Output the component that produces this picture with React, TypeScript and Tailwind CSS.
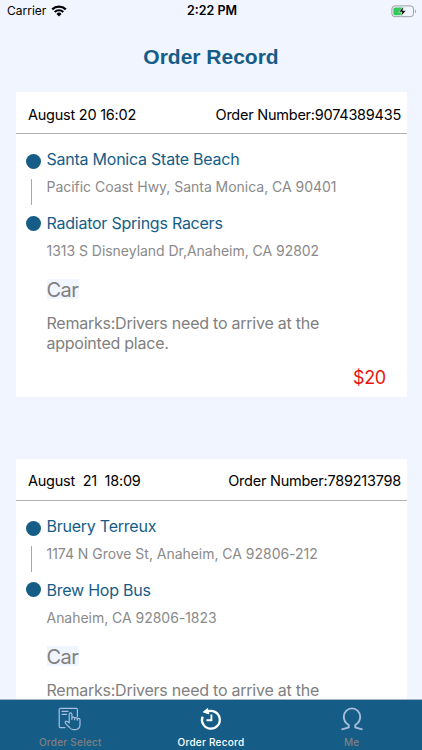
import { Fragment } from "react";

interface Stop {
  name: string;
  address: string;
}

interface Order {
  date: string;
  number: string;
  stops: Stop[];
  vehicle: string;
  remarks: string;
  price: string;
}

const orders: Order[] = [
  {
    date: "August 20 16:02",
    number: "9074389435",
    stops: [
      {
        name: "Santa Monica State Beach",
        address: "Pacific Coast Hwy, Santa Monica, CA 90401",
      },
      {
        name: "Radiator Springs Racers",
        address: "1313 S Disneyland Dr,Anaheim, CA 92802",
      },
    ],
    vehicle: "Car",
    remarks: "Drivers need to arrive at the appointed place.",
    price: "$20",
  },
  {
    date: "August  21  18:09",
    number: "789213798",
    stops: [
      {
        name: "Bruery Terreux",
        address: "1174 N Grove St, Anaheim, CA 92806-212",
      },
      { name: "Brew Hop Bus", address: "Anaheim, CA 92806-1823" },
    ],
    vehicle: "Car",
    remarks: "Drivers need to arrive at the appointed place.",
    price: "$20",
  },
];

function WifiIcon() {
  return (
    <svg width="16" height="12" viewBox="0 0 16 12" fill="none">
      <path d="M1.2 4.3a9.8 9.8 0 0 1 13.6 0" stroke="black" strokeWidth="2.3" />
      <path d="M3.7 7a6.2 6.2 0 0 1 8.6 0" stroke="black" strokeWidth="2.1" />
      <path d="M8 11.4 5.5 8.9a3.5 3.5 0 0 1 5 0Z" fill="black" />
    </svg>
  );
}

function BatteryIcon() {
  return (
    <svg width="26" height="13" viewBox="0 0 26 13" fill="none">
      <rect x="0.9" y="0.9" width="21.6" height="10.8" rx="3" stroke="#9b9da3" />
      <path d="M24 4.4c1.3.5 1.3 3.3 0 3.8Z" fill="#9b9da3" />
      <rect x="2.4" y="2.4" width="9.6" height="7.8" rx="1.5" fill="#34c759" />
      <path
        d="M12.9 1.2 7.6 7h3.3l-1.1 4.4L15.2 5.6h-3.4Z"
        fill="black"
        stroke="#f0f5ff"
        strokeWidth="0.7"
      />
    </svg>
  );
}

function SelectIcon() {
  return (
    <svg
      width="24"
      height="24"
      viewBox="0 0 24 24"
      fill="none"
      stroke="#a9bede"
      strokeWidth="1.2"
      strokeLinecap="round"
      strokeLinejoin="round"
    >
      <path d="M7 20.6H2.4a1.2 1.2 0 0 1-1.2-1.2V2.5a1.2 1.2 0 0 1 1.2-1.2h15.8a1.2 1.2 0 0 1 1.2 1.2v7" />
      <path d="M4 4.3h6M4 7.3h4.5" />
      <path d="M11.2 15.8V7.2a1.35 1.35 0 0 1 2.7 0v5.3-1.1a1.35 1.35 0 0 1 2.7 0v1.3-.7a1.35 1.35 0 0 1 2.7 0v1.2-.4a1.35 1.35 0 0 1 2.7 0v4.8c0 3.2-1.8 5-4.8 5h-1.8c-1.8 0-2.8-.7-3.9-2.1l-4-4.2c-1.1-1.4.5-2.8 1.8-1.8Z" />
    </svg>
  );
}

function RecordIcon() {
  return (
    <svg width="24" height="24" viewBox="0 0 24 24" fill="none" stroke="white">
      <path d="M3.6 9.6A8.9 8.9 0 1 0 8 4.8" strokeWidth="2.3" />
      <path d="M4.3 5 8.6 1.5 9.8 6.9Z" fill="white" strokeLinejoin="round" />
      <path d="M12.4 7.6v5.7H7.4" strokeWidth="1.9" />
    </svg>
  );
}

function MeIcon() {
  return (
    <svg
      width="24"
      height="24"
      viewBox="0 0 24 24"
      fill="none"
      stroke="#a9bede"
      strokeWidth="1.9"
    >
      <path d="M1.4 22.4c2.4-.3 4.6-1.2 7.3-2.1V18C5 15.9 3.8 13 3.8 9.6a8.2 8.2 0 0 1 16.4 0c0 3.4-1.2 6.3-4.9 8.4v2.3c2.7.9 4.9 1.8 7.3 2.1" />
    </svg>
  );
}

function OrderCard({ order }: { order: Order }) {
  return (
    <article className="h-[305px] shrink-0 bg-white">
      <header className="flex h-[42px] items-center justify-between border-b border-[#b2b2b2] pt-[4px] pr-[5.5px] pl-[12.5px] text-[14.5px] tracking-[-0.24px] whitespace-pre text-black">
        <span>{order.date}</span>
        <span>{`Order Number:${order.number}`}</span>
      </header>

      <div className="grid grid-cols-[15px_1fr] gap-x-[5.5px] pt-[12px] pl-[10.5px]">
        {order.stops.map((stop, i) => (
          <Fragment key={stop.name}>
            <div className="flex flex-col">
              <span
                className={`${i === 0 ? "mt-[8px]" : "mt-[5.5px]"} size-[15px] rounded-full bg-[#155d87]`}
              />
              {i === 0 && (
                <span className="mt-[10px] ml-[5px] h-[26px] w-px bg-[#a8a8a8]" />
              )}
            </div>
            <div className="h-16">
              <h2 className="h-[26px] text-[16px] leading-[26px] tracking-[-0.24px] text-[#155d87]">
                {stop.name}
              </h2>
              <p className="mt-[4px] text-[14px] leading-[22px] tracking-[-0.03px] text-[#8a8a8a]">
                {stop.address}
              </p>
            </div>
          </Fragment>
        ))}
      </div>

      <div className="pl-[31px] text-[#808080]">
        <span className="mt-[5px] block h-5 w-8 bg-[#f0f5ff] text-[20px] leading-[22px] tracking-[-0.5px]">
          {order.vehicle}
        </span>
        <p className="mt-[15px] w-[300px] text-[16px] leading-[19.5px] tracking-[-0.24px]">
          {`Remarks:${order.remarks}`}
        </p>
      </div>
      <p className="mt-[13px] pr-[21px] text-right text-[18px] leading-6 tracking-[-0.5px] text-[#e8150f]">
        {order.price}
      </p>
    </article>
  );
}

export default function App() {
  return (
    <div className="flex h-[750px] w-[422px] flex-col overflow-hidden bg-[#f0f5ff] font-[Inter,sans-serif]">
      <div className="grid h-[22px] shrink-0 grid-cols-3 items-center pr-[5px] pl-[7px] text-[12px]">
        <div className="flex items-center gap-[5px]">
          <span>Carrier</span>
          <WifiIcon />
        </div>
        <span className="text-center text-[12.5px] font-semibold">2:22 PM</span>
        <div className="flex justify-end">
          <BatteryIcon />
        </div>
      </div>

      <h1 className="h-[70px] shrink-0 text-center font-['Liberation_Sans',sans-serif] text-[21px] leading-[70px] font-bold text-[#155d87]">
        Order Record
      </h1>

      <main className="flex min-h-0 flex-1 flex-col gap-[61.5px] overflow-hidden px-[15.5px]">
        {orders.map((order) => (
          <OrderCard key={order.number} order={order} />
        ))}
      </main>

      <nav className="grid h-[51px] shrink-0 grid-cols-3 border-t border-[#a3b5c2] bg-[#155d87] text-[10px] font-medium tracking-[0.25px] text-[#808080]">
        <div className="flex flex-col items-center pt-[7px]">
          <SelectIcon />
          <span className="mt-[5px] leading-3">Order Select</span>
        </div>
        <div className="flex flex-col items-center pt-[7px] text-white">
          <RecordIcon />
          <span className="mt-[5px] leading-3">Order Record</span>
        </div>
        <div className="flex flex-col items-center pt-[7px]">
          <MeIcon />
          <span className="mt-[5px] leading-3">Me</span>
        </div>
      </nav>
    </div>
  );
}
